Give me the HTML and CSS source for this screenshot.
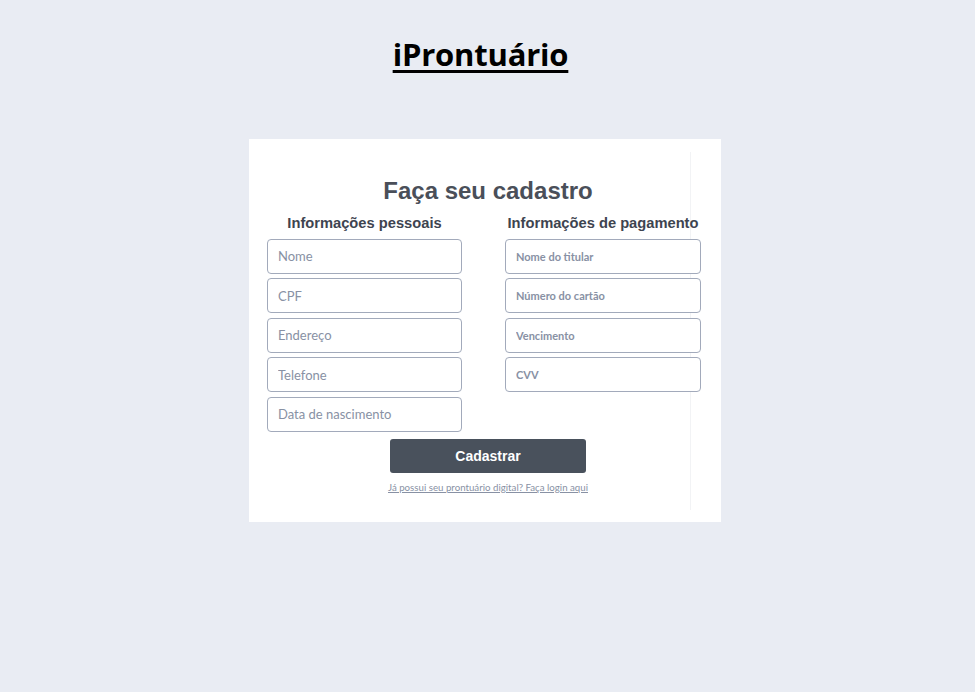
FILE: index.html
```html
<!DOCTYPE html>
<html lang="pt-BR">
<head>
<meta charset="utf-8">
<title>iProntuário</title>
<link rel="stylesheet" href="styles.css">
</head>
<body>
<header class="brand"><h1 class="brand-title">iProntuário</h1></header>
<main class="card">
  <form class="card-inner">
    <h2 class="form-title">Faça seu cadastro</h2>
    <div class="columns">
      <section class="col">
        <h3 class="col-title">Informações pessoais</h3>
        <input class="field" placeholder="Nome">
        <input class="field" placeholder="CPF">
        <input class="field" placeholder="Endereço">
        <input class="field" placeholder="Telefone">
        <input class="field" placeholder="Data de nascimento">
      </section>
      <section class="col">
        <h3 class="col-title">Informações de pagamento</h3>
        <input class="field field-bold" placeholder="Nome do titular">
        <input class="field field-bold" placeholder="Número do cartão">
        <input class="field field-bold" placeholder="Vencimento">
        <input class="field field-bold" placeholder="CVV">
      </section>
    </div>
    <div class="actions">
      <button type="button" class="btn">Cadastrar</button>
      <a class="login-link" href="#">Já possui seu prontuário digital? Faça login aqui</a>
    </div>
  </form>
</main>
</body>
</html>
```
FILE: styles.css
```css
* { box-sizing: border-box; }
html, body { margin: 0; padding: 0; }
body {
  background: #e9ecf3;
  font-family: "Liberation Sans", Arial, sans-serif;
  min-height: 692px;
}
.brand {
  display: flex;
  justify-content: center;
  padding-top: 34px;
}
.brand-title {
  margin: 0 0 0 -14px;
  font-family: "Open Sans", sans-serif;
  font-weight: 700;
  font-size: 31px;
  line-height: 40px;
  color: #000;
  text-decoration: underline;
  text-decoration-thickness: 3px;
  text-underline-offset: 4px;
  letter-spacing: -0.2px;
}
.card {
  width: 472px;
  height: 383px;
  margin: 65px 0 0 249px;
  background: #fff;
  padding: 13px 30px 12px 0;
}
.card-inner {
  height: 100%;
  border-right: 1px solid #f2f3f5;
  padding: 24px 0 0 18px;
  display: flex;
  flex-direction: column;
}
.form-title {
  margin: 0;
  width: 433px;
  padding-left: 9px;
  text-align: center;
  font-size: 24px;
  line-height: 30px;
  font-weight: 700;
  color: #4a4f59;
  white-space: nowrap;
}
.columns {
  display: flex;
  gap: 43px;
  margin-top: 7px;
}
.col {
  flex: 0 0 195px;
  width: 195px;
  display: flex;
  flex-direction: column;
  gap: 4.5px;
}
.col:last-child { flex-basis: 196px; width: 196px; }
.col-title {
  margin: 0 0 1px;
  text-align: center;
  font-size: 14.7px;
  line-height: 20px;
  font-weight: 700;
  color: #3e4450;
  white-space: nowrap;
}
.field {
  width: 100%;
  height: 35px;
  border: 1px solid #a2aabb;
  border-radius: 4px;
  padding: 0 10px;
  font-family: Lato, sans-serif;
  font-size: 13px;
  color: #333;
  background: #fff;
  outline: none;
}
.field::placeholder { color: #8891a4; }
.field-bold {
  font-size: 11px;
  font-weight: 700;
}
.actions {
  display: flex;
  flex-direction: column;
  align-items: center;
  width: 433px;
  margin-top: 7px;
  padding-left: 9px;
}
.btn {
  width: 196px;
  height: 34px;
  border: none;
  border-radius: 3px;
  background: #49515c;
  color: #fff;
  font-family: "Liberation Sans", Arial, sans-serif;
  font-weight: 700;
  font-size: 14px;
  cursor: pointer;
}
.login-link {
  margin-top: 8px;
  font-family: Lato, sans-serif;
  font-size: 9.7px;
  color: #8891a4;
  text-decoration: underline;
}
```
